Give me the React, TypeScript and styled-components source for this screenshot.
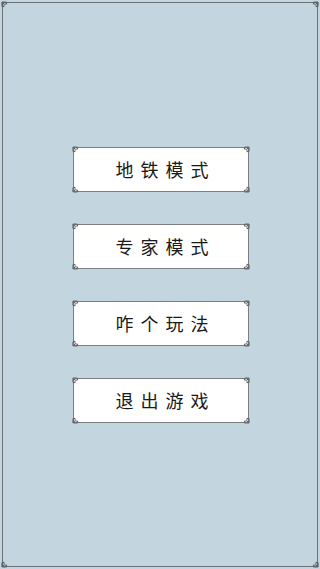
import React from 'react';
import styled, { createGlobalStyle } from 'styled-components';

const GlobalStyle = createGlobalStyle`
  html, body {
    margin: 0;
    padding: 0;
    background: #c3d5df;
  }
  #root {
    height: 100vh;
  }
`;

const Screen = styled.div`
  box-sizing: border-box;
  position: relative;
  height: 100vh;
  padding: 2px;
`;

const Frame = styled.div`
  position: relative;
  box-sizing: border-box;
  height: 100%;
  border: 1.5px solid #6a7075;
  display: flex;
  flex-direction: column;
  align-items: center;
  justify-content: center;
  gap: 32px;
  padding-left: 2px;
`;

const MenuButton = styled.button`
  position: relative;
  box-sizing: border-box;
  width: 176px;
  height: 45px;
  background: #ffffff;
  border: 1.5px solid #7d7e83;
  padding: 0 0 1px 9px;
  font-family: "Noto Sans CJK SC", "Noto Sans", sans-serif;
  font-size: 18px;
  font-weight: 400;
  letter-spacing: 7px;
  color: #1a1a1a;
  cursor: pointer;
`;

const Ornament = styled.svg<{ $corner: 'tl' | 'tr' | 'bl' | 'br'; $size: number }>`
  position: absolute;
  width: ${(p) => p.$size}px;
  height: ${(p) => p.$size}px;
  ${(p) => (p.$corner[0] === 't' ? 'top' : 'bottom')}: -2px;
  ${(p) => (p.$corner[1] === 'l' ? 'left' : 'right')}: -2px;
  transform: ${(p) =>
    p.$corner === 'tl'
      ? 'none'
      : p.$corner === 'tr'
      ? 'scaleX(-1)'
      : p.$corner === 'bl'
      ? 'scaleY(-1)'
      : 'scale(-1, -1)'};
`;

const Corner: React.FC<{ corner: 'tl' | 'tr' | 'bl' | 'br'; size?: number; color?: string }> = ({
  corner,
  size = 8,
  color = '#66676c',
}) => (
  <Ornament $corner={corner} $size={size} viewBox="0 0 8 8">
    <path
      d="M1 1 L4.5 1 M1 1 L1 4.5 M4.5 1 C6 1 6 3.2 4.2 3.2 M1 4.5 C1 6 3.2 6 3.2 4.2 M1 1 L3.6 3.6"
      fill="none"
      stroke={color}
      strokeWidth="1.2"
    />
  </Ornament>
);

const items = ['地铁模式', '专家模式', '咋个玩法', '退出游戏'];

export default function App() {
  return (
    <Screen>
      <GlobalStyle />
      <Frame>
        <Corner corner="tl" size={8} color="#5c6166" />
        <Corner corner="tr" size={8} color="#5c6166" />
        <Corner corner="bl" size={8} color="#5c6166" />
        <Corner corner="br" size={8} color="#5c6166" />
        {items.map((label) => (
          <MenuButton key={label}>
            <Corner corner="tl" />
            <Corner corner="tr" />
            <Corner corner="bl" />
            <Corner corner="br" />
            {label}
          </MenuButton>
        ))}
      </Frame>
    </Screen>
  );
}
